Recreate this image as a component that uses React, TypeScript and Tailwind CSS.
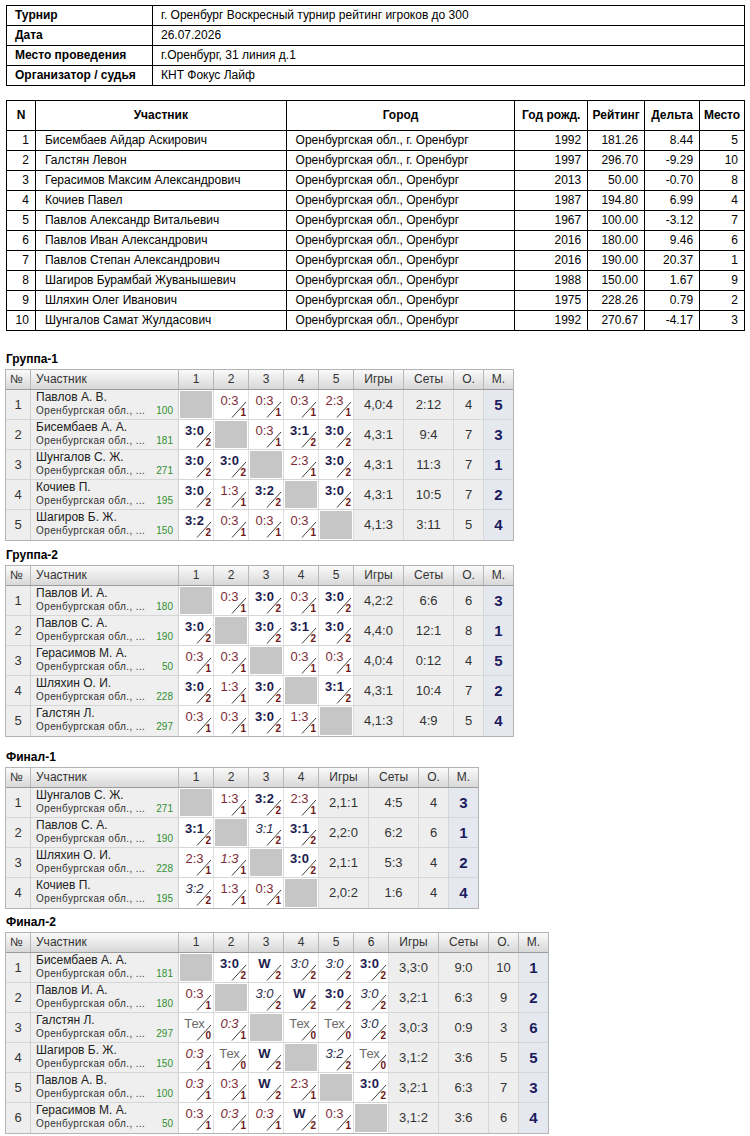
import React from "react";

type Row = { n: number; name: string; r: string; c: string[]; g: string; s: string; o: string; m: string };

const group1: Row[] = [
  { n: 1, name: "Павлов А. В.", r: "100", c: ["X", "L0:3", "L0:3", "L0:3", "L2:3"], g: "4,0:4", s: "2:12", o: "4", m: "5" },
  { n: 2, name: "Бисембаев А. А.", r: "181", c: ["W3:0", "X", "L0:3", "W3:1", "W3:0"], g: "4,3:1", s: "9:4", o: "7", m: "3" },
  { n: 3, name: "Шунгалов С. Ж.", r: "271", c: ["W3:0", "W3:0", "X", "L2:3", "W3:0"], g: "4,3:1", s: "11:3", o: "7", m: "1" },
  { n: 4, name: "Кочиев П.", r: "195", c: ["W3:0", "L1:3", "W3:2", "X", "W3:0"], g: "4,3:1", s: "10:5", o: "7", m: "2" },
  { n: 5, name: "Шагиров Б. Ж.", r: "150", c: ["W3:2", "L0:3", "L0:3", "L0:3", "X"], g: "4,1:3", s: "3:11", o: "5", m: "4" },
];

const group2: Row[] = [
  { n: 1, name: "Павлов И. А.", r: "180", c: ["X", "L0:3", "W3:0", "L0:3", "W3:0"], g: "4,2:2", s: "6:6", o: "6", m: "3" },
  { n: 2, name: "Павлов С. А.", r: "190", c: ["W3:0", "X", "W3:0", "W3:1", "W3:0"], g: "4,4:0", s: "12:1", o: "8", m: "1" },
  { n: 3, name: "Герасимов М. А.", r: "50", c: ["L0:3", "L0:3", "X", "L0:3", "L0:3"], g: "4,0:4", s: "0:12", o: "4", m: "5" },
  { n: 4, name: "Шляхин О. И.", r: "228", c: ["W3:0", "L1:3", "W3:0", "X", "W3:1"], g: "4,3:1", s: "10:4", o: "7", m: "2" },
  { n: 5, name: "Галстян Л.", r: "297", c: ["L0:3", "L0:3", "W3:0", "L1:3", "X"], g: "4,1:3", s: "4:9", o: "5", m: "4" },
];

const final1: Row[] = [
  { n: 1, name: "Шунгалов С. Ж.", r: "271", c: ["X", "L1:3", "W3:2", "L2:3"], g: "2,1:1", s: "4:5", o: "4", m: "3" },
  { n: 2, name: "Павлов С. А.", r: "190", c: ["W3:1", "X", "w3:1", "W3:1"], g: "2,2:0", s: "6:2", o: "6", m: "1" },
  { n: 3, name: "Шляхин О. И.", r: "228", c: ["L2:3", "l1:3", "X", "W3:0"], g: "2,1:1", s: "5:3", o: "4", m: "2" },
  { n: 4, name: "Кочиев П.", r: "195", c: ["w3:2", "L1:3", "L0:3", "X"], g: "2,0:2", s: "1:6", o: "4", m: "4" },
];

const final2: Row[] = [
  { n: 1, name: "Бисембаев А. А.", r: "181", c: ["X", "W3:0", "WW", "w3:0", "w3:0", "W3:0"], g: "3,3:0", s: "9:0", o: "10", m: "1" },
  { n: 2, name: "Павлов И. А.", r: "180", c: ["L0:3", "X", "w3:0", "WW", "W3:0", "w3:0"], g: "3,2:1", s: "6:3", o: "9", m: "2" },
  { n: 3, name: "Галстян Л.", r: "297", c: ["T", "l0:3", "X", "T", "T", "w3:0"], g: "3,0:3", s: "0:9", o: "3", m: "6" },
  { n: 4, name: "Шагиров Б. Ж.", r: "150", c: ["l0:3", "T", "WW", "X", "w3:2", "T"], g: "3,1:2", s: "3:6", o: "5", m: "5" },
  { n: 5, name: "Павлов А. В.", r: "100", c: ["l0:3", "L0:3", "WW", "L2:3", "X", "W3:0"], g: "3,2:1", s: "6:3", o: "7", m: "3" },
  { n: 6, name: "Герасимов М. А.", r: "50", c: ["L0:3", "l0:3", "l0:3", "WW", "L0:3", "X"], g: "3,1:2", s: "3:6", o: "6", m: "4" },
];

const participants = [
  ["1", "Бисембаев Айдар Аскирович", "Оренбургская обл., г. Оренбург", "1992", "181.26", "8.44", "5"],
  ["2", "Галстян Левон", "Оренбургская обл., г. Оренбург", "1997", "296.70", "-9.29", "10"],
  ["3", "Герасимов Максим Александрович", "Оренбургская обл., Оренбург", "2013", "50.00", "-0.70", "8"],
  ["4", "Кочиев Павел", "Оренбургская обл., Оренбург", "1987", "194.80", "6.99", "4"],
  ["5", "Павлов Александр Витальевич", "Оренбургская обл., Оренбург", "1967", "100.00", "-3.12", "7"],
  ["6", "Павлов Иван Александрович", "Оренбургская обл., Оренбург", "2016", "180.00", "9.46", "6"],
  ["7", "Павлов Степан Александрович", "Оренбургская обл., Оренбург", "2016", "190.00", "20.37", "1"],
  ["8", "Шагиров Бурамбай Жуванышевич", "Оренбургская обл., Оренбург", "1988", "150.00", "1.67", "9"],
  ["9", "Шляхин Олег Иванович", "Оренбургская обл., Оренбург", "1975", "228.26", "0.79", "2"],
  ["10", "Шунгалов Самат Жулдасович", "Оренбургская обл., Оренбург", "1992", "270.67", "-4.17", "3"],
];

function ScoreCell({ v }: { v: string }) {
  if (v === "X") {
    return (
      <div className="w-[35px] h-full shrink-0 border-r border-[#d9d9d9] bg-white p-[1px]">
        <div className="w-full h-full bg-[#c6c6c6]" />
      </div>
    );
  }
  const k = v[0];
  let text = v.slice(1);
  let n = "2";
  let cls = "";
  if (k === "W") {
    cls = "font-bold text-[#1c1c4e]";
  } else if (k === "w") {
    cls = "italic text-[#2c2c4c]";
  } else if (k === "L") {
    cls = "text-[#7e2c38]";
    n = "1";
  } else if (k === "l") {
    cls = "italic text-[#7e2c38]";
    n = "1";
  } else if (k === "T") {
    cls = "text-[#6a6a6a]";
    text = "Тех";
    n = "0";
  }
  return (
    <div className="relative w-[35px] h-full shrink-0 border-r border-[#e0e0e0] bg-white">
      <span className={`absolute left-[4px] top-[3px] w-[23px] text-center text-[13px] leading-[15px] ${cls}`}>{text}</span>
      <svg className="absolute left-0 top-0" width="34" height="29" viewBox="0 0 34 29">
        <line x1="18" y1="27.5" x2="32" y2="12" stroke="#2a2a2a" strokeWidth="0.9" />
      </svg>
      <span className="absolute right-[2px] top-[18px] text-[10px] leading-[10px] font-bold text-[#6e1818]">{n}</span>
    </div>
  );
}

function GroupTable({ title, rows, cols, mt }: { title: string; rows: Row[]; cols: number; mt: string }) {
  const nums = Array.from({ length: cols }, (_, i) => i + 1);
  return (
    <div className={mt}>
      <div className="ml-[6px] h-[14px] leading-[14px] text-[12px] font-bold text-black">{title}</div>
      <div className="ml-[5px] mt-[2px] inline-flex flex-col border border-[#b4b4b4] text-[#333]">
        <div className="flex h-[20px] border-b border-[#9c9c9c] bg-[linear-gradient(#fafafa,#d8d8d8)] text-[12px] leading-[19px]">
          <div className="w-[25px] border-r border-[#b8b8b8] pl-[4px]">№</div>
          <div className="w-[148px] border-r border-[#b8b8b8] pl-[5px]">Участник</div>
          {nums.map((i) => (
            <div key={i} className="w-[35px] border-r border-[#b8b8b8] text-center">{i}</div>
          ))}
          <div className="w-[50px] border-r border-[#b8b8b8] text-center">Игры</div>
          <div className="w-[50px] border-r border-[#b8b8b8] text-center">Сеты</div>
          <div className="w-[30px] border-r border-[#b8b8b8] text-center">О.</div>
          <div className="w-[29px] text-center">М.</div>
        </div>
        {rows.map((r, ri) => (
          <div key={r.n} className={`flex h-[30px] ${ri < rows.length - 1 ? "border-b" : ""} border-[#d6d6d6]`}>
            <div className="w-[25px] shrink-0 border-r border-[#d0d0d0] bg-[#eeeeee] text-center text-[13px] leading-[29px]">{r.n}</div>
            <div className="w-[148px] shrink-0 border-r border-[#d0d0d0] bg-[#efefef] flex flex-col pl-[5px] pr-[5px] overflow-hidden">
              <div className="text-[12px] leading-[15px] text-[#222]">{r.name}</div>
              <div className="flex justify-between items-end leading-[12px]">
                <span className="text-[10px] tracking-[0.4px] text-[#333]">Оренбургская обл., ...</span>
                <span className="text-[10px] text-[#2f8f2f]">{r.r}</span>
              </div>
            </div>
            {r.c.map((v, i) => (
              <ScoreCell key={i} v={v} />
            ))}
            <div className="w-[50px] shrink-0 border-r border-[#d6d6d6] bg-[#eeeeee] text-center text-[13px] leading-[29px]">{r.g}</div>
            <div className="w-[50px] shrink-0 border-r border-[#d6d6d6] bg-[#eeeeee] text-center text-[13px] leading-[29px]">{r.s}</div>
            <div className="w-[30px] shrink-0 border-r border-[#d6d6d6] bg-[#eeeeee] text-center text-[13px] leading-[29px]">{r.o}</div>
            <div className="w-[29px] shrink-0 bg-[#e5e8ee] text-center text-[15px] font-bold leading-[29px] text-[#1c1c5e]">{r.m}</div>
          </div>
        ))}
      </div>
    </div>
  );
}

export default function App() {
  const widths = ["w-[29px]", "w-[251px]", "w-[229px]", "w-[73px]", "w-[57px]", "w-[55px]", "w-[45px]"];
  const headers = ["N", "Участник", "Город", "Год рожд.", "Рейтинг", "Дельта", "Место"];
  return (
    <div className="w-[750px] bg-white font-['Liberation_Sans',Arial,sans-serif] text-black pb-[3px]">
      <div className="pt-[5px]">
        <div className="ml-[6px] w-[739px] border-l border-t border-black text-[12px]">
          {[
            ["Турнир", "г. Оренбург Воскресный турнир рейтинг игроков до 300"],
            ["Дата", "26.07.2026"],
            ["Место проведения", "г.Оренбург, 31 линия д.1"],
            ["Организатор / судья", "КНТ Фокус Лайф"],
          ].map(([a, b]) => (
            <div key={a} className="flex h-[20px] border-b border-black leading-[19px]">
              <div className="w-[146px] border-r border-black pl-[8px] font-bold">{a}</div>
              <div className="flex-1 border-r border-black pl-[8px]">{b}</div>
            </div>
          ))}
        </div>
      </div>

      <div className="ml-[6px] mt-[14px] w-[739px] border-l border-t border-black text-[12px]">
        <div className="flex h-[30px] border-b border-black leading-[29px] font-bold">
          {headers.map((h, i) => (
            <div key={h} className={`${widths[i]} border-r border-black text-center`}>{h}</div>
          ))}
        </div>
        {participants.map((p) => (
          <div key={p[0]} className="flex h-[20px] border-b border-black leading-[19px]">
            {p.map((v, i) => (
              <div
                key={i}
                className={`${widths[i]} border-r border-black ${i === 1 || i === 2 ? "pl-[9px]" : "text-right pr-[6px]"}`}
              >
                {v}
              </div>
            ))}
          </div>
        ))}
      </div>

      <GroupTable title="Группа-1" rows={group1} cols={5} mt="mt-[21px]" />
      <GroupTable title="Группа-2" rows={group2} cols={5} mt="mt-[7px]" />
      <GroupTable title="Финал-1" rows={final1} cols={4} mt="mt-[13px]" />
      <GroupTable title="Финал-2" rows={final2} cols={6} mt="mt-[6px]" />
    </div>
  );
}
